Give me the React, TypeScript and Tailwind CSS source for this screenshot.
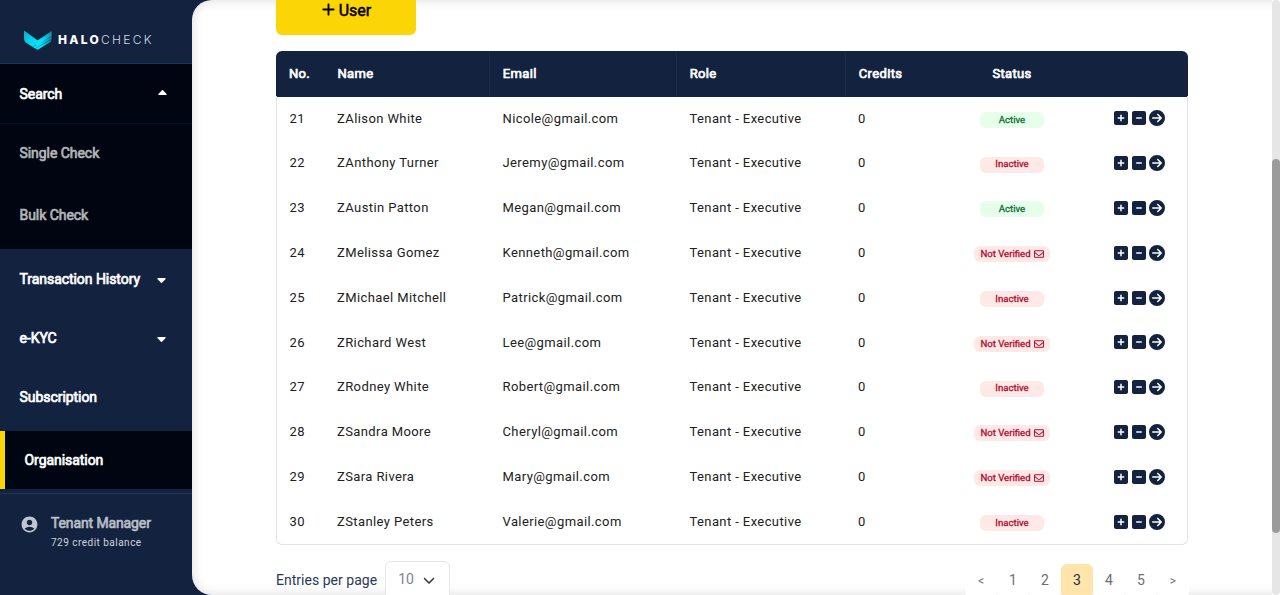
import React from "react";
import { FaPlus, FaSquarePlus, FaSquareMinus, FaCircleArrowRight, FaRegEnvelope, FaChevronDown } from "react-icons/fa6";
import { MdAccountCircle } from "react-icons/md";

type Status = "Active" | "Inactive" | "Not Verified";
type User = { no: number; name: string; email: string; status: Status };

const users: User[] = [
  { no: 21, name: "ZAlison White", email: "Nicole@gmail.com", status: "Active" },
  { no: 22, name: "ZAnthony Turner", email: "Jeremy@gmail.com", status: "Inactive" },
  { no: 23, name: "ZAustin Patton", email: "Megan@gmail.com", status: "Active" },
  { no: 24, name: "ZMelissa Gomez", email: "Kenneth@gmail.com", status: "Not Verified" },
  { no: 25, name: "ZMichael Mitchell", email: "Patrick@gmail.com", status: "Inactive" },
  { no: 26, name: "ZRichard West", email: "Lee@gmail.com", status: "Not Verified" },
  { no: 27, name: "ZRodney White", email: "Robert@gmail.com", status: "Inactive" },
  { no: 28, name: "ZSandra Moore", email: "Cheryl@gmail.com", status: "Not Verified" },
  { no: 29, name: "ZSara Rivera", email: "Mary@gmail.com", status: "Not Verified" },
  { no: 30, name: "ZStanley Peters", email: "Valerie@gmail.com", status: "Inactive" },
];

const columns = "grid grid-cols-[48px_166px_187px_169px_86px_160px_96px]";

function Logo() {
  return (
    <div className="flex h-16 shrink-0 items-end border-b border-[#1c3460] pb-[13px] pl-6">
      <svg width="28" height="20" viewBox="0 0 28 20">
        <defs>
          <linearGradient id="wing" x1="0" y1="0" x2="1" y2="0.6">
            <stop offset="0" stopColor="#12a5c0" />
            <stop offset="0.35" stopColor="#05c8e6" />
            <stop offset="1" stopColor="#00e5ff" />
          </linearGradient>
          <linearGradient id="tip" x1="0" y1="1" x2="1" y2="0">
            <stop offset="0.35" stopColor="#00e5ff" />
            <stop offset="1" stopColor="#16809e" />
          </linearGradient>
        </defs>
        <path d="M12 11.5 L27.7 1 V6 L12 16Z" fill="url(#tip)" />
        <path d="M0 0.5 L13.7 10.5 L16 11.8 L8.8 17 L1.8 12.6 Q0 11 0 8Z" fill="url(#wing)" />
        <path d="M8.8 17 L27.6 6.6 V9 L11.2 18.4Z" fill="url(#tip)" />
        <path d="M11.4 18.4 L27.6 9.4 Q27.6 11.4 25.6 12.6 L13.8 19.8Z" fill="url(#tip)" />
      </svg>
      <div className="mb-[2px] ml-[6px] flex leading-4 text-white">
        <span className="font-['Inter'] text-[12px] font-extrabold tracking-[2.25px]">HALO</span>
        <span className="font-['Inter'] text-[12px] font-light tracking-[2.35px] text-[#d5dae4]">CHECK</span>
      </div>
    </div>
  );
}

function Caret({ up = false }: { up?: boolean }) {
  return (
    <svg width="9" height="5" viewBox="0 0 9 5" fill="white">
      <path d={up ? "M.8 5Q0 5 .4 4L4 .3Q4.5-.1 5 .3L8.6 4Q9 5 8.2 5Z" : "M.8 0Q0 0 .4 1L4 4.7Q4.5 5.1 5 4.7L8.6 1Q9 0 8.2 0Z"} />
    </svg>
  );
}

function Sidebar() {
  return (
    <aside className="flex w-48 shrink-0 flex-col text-[14px] tracking-[-0.05px] text-white">
      <Logo />
      <div className="flex h-[185px] flex-col bg-[#000611] [-webkit-text-stroke:0.7px]">
        <div className="flex h-[60px] items-center justify-between border-b border-[#0a1322] pl-[19.5px] pr-[25px]">
          <span className="mt-px">Search</span>
          <span className="mb-[3px]"><Caret up /></span>
        </div>
        <div className="flex h-[58px] items-center pl-[19.5px] text-[#b3b4b8]">Single Check</div>
        <div className="flex h-[66px] items-center pl-[19.5px] text-[#b3b4b8]">Bulk Check</div>
      </div>
      <div className="flex h-[59px] items-center justify-between pl-[19.5px] pr-[26px] [-webkit-text-stroke:0.7px]">
        <span className="mt-px">Transaction History</span>
        <span className="mt-[3px]"><Caret /></span>
      </div>
      <div className="flex h-[59px] items-center justify-between pl-[19.5px] pr-[26px] [-webkit-text-stroke:0.7px]">
        <span className="mt-px">e-KYC</span>
        <span className="mt-[3px]"><Caret /></span>
      </div>
      <div className="flex h-[59px] items-center pl-[19.5px] pt-px [-webkit-text-stroke:0.7px]">Subscription</div>
      <div className="mt-[5px] flex h-[58px] items-center border-l-5 border-[#fbd505] bg-[#000611] pl-[19.5px] [-webkit-text-stroke:0.7px]">Organisation</div>
      <div className="mt-1 flex border-t border-[#1c3460] pl-5 pt-[19px]">
        <MdAccountCircle className="mt-[2px] size-[19px] text-[#c0c5cf]" />
        <div className="ml-3 flex flex-col">
          <span className="leading-5 tracking-[-0.12px] text-[#b9bdc5] [-webkit-text-stroke:0.7px]">Tenant Manager</span>
          <span className="text-[10px] leading-5 tracking-[0.48px] text-[#d0d4dc]">729 credit balance</span>
        </div>
      </div>
    </aside>
  );
}

function StatusBadge({ status }: { status: Status }) {
  if (status === "Active") {
    return <span className="mt-[3px] flex h-4 w-16 items-center justify-center rounded-md bg-[#e6ffea] text-[9.6px] text-[#0b6b35] [-webkit-text-stroke:0.3px]">Active</span>;
  }
  if (status === "Inactive") {
    return <span className="mt-[3px] flex h-4 w-16 items-center justify-center rounded-md bg-[#ffe9e6] text-[9.6px] text-[#b00a32] [-webkit-text-stroke:0.3px]">Inactive</span>;
  }
  return (
    <span className="mt-[3px] flex h-4 w-[76px] items-center justify-center gap-[3px] rounded-md bg-[#ffe9e6] text-[9.6px] text-[#b00a32] [-webkit-text-stroke:0.3px]">
      Not Verified
      <FaRegEnvelope className="size-[10px]" />
    </span>
  );
}

function UserTable() {
  return (
    <div className="mt-4 text-[13px] text-[#212121]">
      <div className={`${columns} h-[46px] items-stretch rounded-t-md bg-[#12223f] text-[13px] leading-[46px] text-white [-webkit-text-stroke:0.7px]`}>
        <span className="pl-[13px] tracking-[0.3px]">No.</span>
        <span className="border-r border-[#1b2b48] pl-[13.5px] tracking-[0.3px]">Name</span>
        <span className="border-r border-[#1b2b48] pl-[12.8px] tracking-[0.35px]">Email</span>
        <span className="border-r border-[#1b2b48] pl-[12.8px] tracking-[0.3px]">Role</span>
        <span className="pl-[12.8px] tracking-[0.35px]">Credits</span>
        <span className="text-center tracking-[0.3px]">Status</span>
        <span />
      </div>
      <div className="-mt-px rounded-b-md border border-t-0 border-[#e2e3e5]">
        {users.map((user) => (
          <div key={user.no} className={`${columns} -mx-px h-[44.8px] items-center tracking-[0.4px]`}>
            <span className="pl-[13.5px]">{user.no}</span>
            <span className="pl-[13px]">{user.name}</span>
            <span className="pl-[12.5px]">{user.email}</span>
            <span className="pl-[12.5px]">Tenant - Executive</span>
            <span className="pl-3">0</span>
            <span className="flex justify-center tracking-normal"><StatusBadge status={user.status} /></span>
            <span className="flex items-center gap-[2px] pl-[21px] text-[#12223f]">
              <FaSquarePlus className="size-4" />
              <FaSquareMinus className="size-4" />
              <FaCircleArrowRight className="size-4" />
            </span>
          </div>
        ))}
      </div>
    </div>
  );
}

function Pagination() {
  return (
    <div className="flex text-[14px] text-[#6c6f78]">
      {["<", "1", "2", "3", "4", "5", ">"].map((item) => (
        <span
          key={item}
          className={`flex h-[34px] w-8 items-center justify-center rounded-md ${item === "3" ? "bg-[#ffe5ab] text-[#222b3c]" : "bg-white"} ${item === "<" || item === ">" ? "text-[12px]" : ""}`}
        >
          {item}
        </span>
      ))}
    </div>
  );
}

export default function App() {
  return (
    <div className="flex h-[595px] w-full overflow-hidden bg-[#12223f] font-['Roboto',sans-serif]">
      <Sidebar />
      <div className="flex min-w-0 flex-1 overflow-hidden rounded-l-[20px] bg-white">
        <main className="-mr-4 flex min-w-0 flex-1 rounded-l-[20px] shadow-[inset_0_0_12px_rgba(0,0,0,0.14)]">
          <div className="ml-[84px] w-[912px] shrink-0">
            <button className="flex h-[35px] w-[140px] items-start justify-center gap-1 rounded-b-md bg-[#fbd505] text-[16px] leading-[21px] text-black">
              <FaPlus className="mt-[2px] size-[15px]" />
              <span className="-ml-px [-webkit-text-stroke:0.5px]">User</span>
            </button>
            <UserTable />
            <div className="mt-4 flex items-start justify-between">
              <div className="flex items-start text-[14px] text-[#2a3957]">
                <span className="mt-[9px] tracking-[0.02px]">Entries per page</span>
                <div className="ml-2 flex h-10 w-[65px] items-start justify-between rounded-t-md border border-[#e4e5e8] bg-white pl-3 pr-[14px] pt-[7px] text-[#80838b]">
                  <span>10</span>
                  <FaChevronDown className="mt-[5px] size-3 text-[#30353d]" />
                </div>
              </div>
              <div className="-mr-px mt-[3px]"><Pagination /></div>
            </div>
          </div>
        </main>
      </div>
      <div className="flex w-2 shrink-0 flex-col bg-white">
        <div className="h-full rounded-full bg-[#e6e6e6] pt-[159px]">
          <div className="h-[374px] rounded-full bg-[#9b9b9b]" />
        </div>
      </div>
    </div>
  );
}
